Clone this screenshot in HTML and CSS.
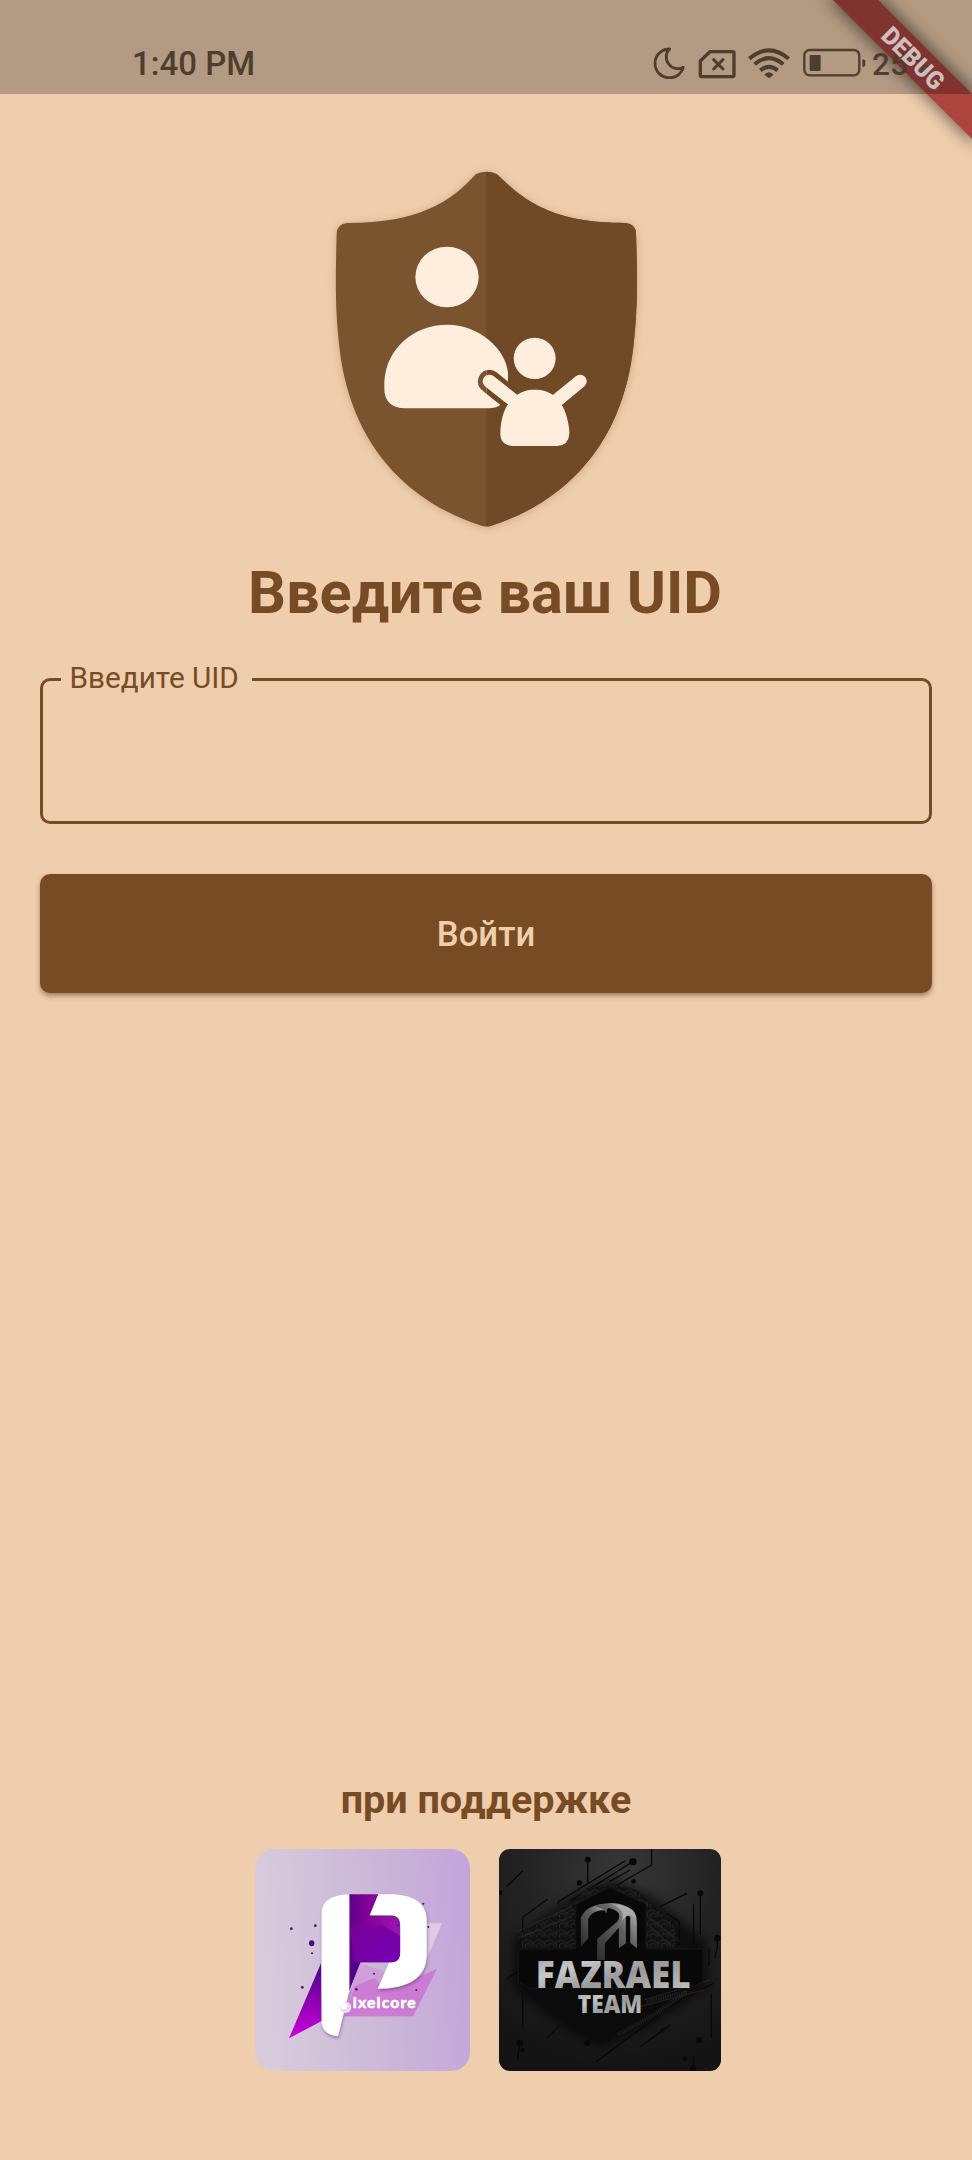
FILE: index.html
```html
<!DOCTYPE html>
<html lang="ru">
<head>
<meta charset="utf-8">
<title>UID</title>
<link rel="stylesheet" href="styles.css">
</head>
<body>
<div class="screen">
  <svg class="ribbon" viewBox="0 0 160 160">
    <defs><filter id="soft" x="-20%" y="-20%" width="140%" height="140%"><feGaussianBlur stdDeviation="8"/></filter></defs>
    <path d="M20-1H65L161 95V140Z" fill="#000" stroke="#000" stroke-width="6" opacity=".5" filter="url(#soft)"/>
    <path d="M20-1H65L161 95V140Z" fill="#ad443d"/>
  </svg>
  <header class="status">
    <span class="time">1:40 PM</span>
    <svg class="indicators" viewBox="100 135 640 110" fill="none" stroke="#4e3e2f" stroke-width="7" stroke-linejoin="round" stroke-linecap="round">
      <path d="M150 147C126 147 106 165 106 190C106 215 125 233 149 233C170 233 186 220 191 202C176 210 157 206 147 192C136 177 138 158 150 147Z" stroke-width="8.5"/>
      <path d="M271 155H339Q343 155 343 159V226Q343 230 339 230H246Q242 230 242 226V183Z" stroke-width="10"/>
      <path d="M282 179L310 207M310 179L282 207" stroke-width="9"/>
      <path d="M389 176Q448 126 507 176M405 193Q448 156 491 193M422 211Q448 190 474 211" stroke-width="12" stroke-linecap="butt"/>
      <path d="M437 224Q448 214 459 224L448 232Z" fill="#4e3e2f" stroke-width="4"/>
      <rect x="554" y="150" width="165" height="76" rx="16"/>
      <rect x="570" y="165" width="33" height="48" rx="3" fill="#4e3e2f" stroke="none"/>
      <path d="M728 178Q737 178 737 184V194Q737 200 728 200Z" fill="#4e3e2f" stroke="none"/>
    </svg>
    <span class="charge">25%</span>
  </header>
  <svg class="ribbon-label" viewBox="0 0 160 160">
    <text x="0" y="9" transform="translate(101.4 58) rotate(45)" text-anchor="middle" textLength="77" lengthAdjust="spacingAndGlyphs">DEBUG</text>
  </svg>

  <main class="login">
    <svg class="shield" viewBox="0 0 990 1140">
      <defs>
        <clipPath id="right"><rect x="499" y="0" width="491" height="1140"/></clipPath>
        <clipPath id="left"><rect x="460" y="600" width="39" height="130"/></clipPath>
      </defs>
      <path id="s" fill="#7a532f" d="M499 35Q518 35 531 43C615 125 700 189 916 189Q948 192 948 222C953 370 952 455 940 560C910 830 760 1015 518 1096Q499 1103 480 1096C238 1015 88 830 58 560C46 455 46 370 50 222Q50 192 82 189C298 189 393 125 467 43Q480 35 499 35Z"/>
      <use href="#s" clip-path="url(#right)" class="shade"/>
      <g fill="#ffeede">
        <ellipse cx="381" cy="351" rx="95" ry="91"/>
        <path d="M193 665C198 565 282 494 381 494C475 494 558 565 564 640V690Q556 745 505 745H252Q193 742 193 685Z"/>
      </g>
      <path d="M508 664L590 730" stroke="#6e4824" stroke-width="69" stroke-linecap="round" clip-path="url(#right)"/>
      <path d="M508 664L540 691" stroke="#7a532f" stroke-width="69" stroke-linecap="round" clip-path="url(#left)"/>
      <g fill="#ffeede">
        <ellipse cx="644" cy="595" rx="63" ry="62"/>
        <path d="M508 664L602 738M780 664L690 738" stroke="#ffeede" stroke-width="40" stroke-linecap="round"/>
        <path d="M644 689C670 689 685 695 700 706L727 737C742 765 748 800 748 822Q746 855 712 858H577Q542 855 541 822C541 795 546 762 561 737L590 706C604 695 620 689 644 689Z"/>
      </g>
    </svg>
    <h1 class="title">Введите ваш UID</h1>
    <fieldset class="field"><legend class="field-label">Введите UID</legend></fieldset>
    <button class="submit">Войти</button>
  </main>

  <footer class="support">
    <h2 class="support-title">при поддержке</h2>
    <div class="logos">
      <svg class="logo pixelcore" viewBox="30 32 645 666" preserveAspectRatio="none">
        <defs>
          <linearGradient id="lilac" x1="0" y1=".1" x2="1" y2="0"><stop offset="0" stop-color="#d8cbdc"/><stop offset=".55" stop-color="#cab7d7"/><stop offset="1" stop-color="#c2a4dc"/></linearGradient>
          <linearGradient id="violet" x1="0" y1="0" x2="0" y2="1"><stop offset="0" stop-color="#4e0087"/><stop offset="1" stop-color="#cc00dc"/></linearGradient>
          <linearGradient id="stem" x1="0" y1="0" x2="1" y2="0"><stop offset="0" stop-color="#5c0088"/><stop offset=".4" stop-color="#850099"/><stop offset="1" stop-color="#9c18b0"/></linearGradient>
          <linearGradient id="hill" x1="0" y1="0" x2="1" y2="1"><stop offset="0" stop-color="#780093"/><stop offset="1" stop-color="#7500b5"/></linearGradient>
          <filter id="drop" x="-20%" y="-20%" width="140%" height="140%"><feDropShadow dx="2" dy="6" stdDeviation="5" flood-color="#5b2a80" flood-opacity=".5"/></filter>
        </defs>
        <rect x="30" y="32" width="645" height="666" fill="url(#lilac)"/>
        <path d="M545 255H591L545 362Z" fill="#dfcbe4"/>
        <path d="M341 372L295 534H504L576 391L490 428L395 391Z" fill="#cf91d8" opacity=".65"/>
        <path d="M300 534L330 443L390 418L408 445L450 440L545 407L576 391L504 534Z" fill="#cb70d0" opacity=".75"/>
        <path d="M228 375L132 600L230 548Z" fill="url(#violet)"/>
        <path d="M312 168H400L376 231H438Q466 231 466 262V345Q466 372 438 372H346L312 457Z" fill="url(#stem)"/>
        <path d="M315 272L346 248L385 268L410 260L466 292V345Q466 372 438 372H330Z" fill="url(#hill)"/>
        <path d="M312 372H346L312 457Z" fill="#51008b"/>
        <g fill="#fff" filter="url(#drop)">
          <path d="M313 168V457L279 594Q231 588 230 550V225C230 188 260 170 313 168Z"/>
          <path d="M400 168H435C505 168 545 195 545 245V350C545 420 485 452 398 451L432 373C460 373 466 362 466 340V262C466 238 455 231 435 231H374Z"/>
        </g>
        <circle cx="302" cy="507" r="17" fill="#eadcec"/><circle cx="296" cy="503" r="10" fill="#fff"/>
        <g fill="#4c087d"><ellipse cx="200" cy="315" rx="8" ry="9"/><circle cx="139" cy="271" r="4"/><circle cx="211" cy="262" r="4"/><circle cx="201" cy="345" r="3"/><circle cx="172" cy="447" r="4"/><circle cx="535" cy="196" r="3"/><circle cx="550" cy="266" r="3"/><circle cx="387" cy="406" r="3"/><circle cx="334" cy="453" r="4"/><circle cx="514" cy="455" r="3"/><circle cx="459" cy="261" r="3"/></g>
        <text class="pixel-text" x="323" y="509" textLength="189" lengthAdjust="spacing">ixelcore</text>
      </svg>
      <svg class="logo fazrael" viewBox="27 32 665 666" preserveAspectRatio="none">
        <defs>
          <radialGradient id="coal" cx=".55" cy=".1" r=".9"><stop offset="0" stop-color="#373737"/><stop offset=".45" stop-color="#242424"/><stop offset="1" stop-color="#141414"/></radialGradient>
          <linearGradient id="steel" x1="0" y1="0" x2="1" y2="1"><stop offset="0" stop-color="#959595"/><stop offset=".3" stop-color="#c8c8c8"/><stop offset=".55" stop-color="#999"/><stop offset="1" stop-color="#c9c9c9"/></linearGradient>
          <linearGradient id="metal" x1="0" y1="1" x2="1" y2="0"><stop offset="0" stop-color="#292929"/><stop offset=".6" stop-color="#626262"/><stop offset="1" stop-color="#c0c0c0"/></linearGradient>
          <filter id="haze" x="-20%" y="-20%" width="140%" height="140%"><feGaussianBlur stdDeviation="14"/></filter>
          <pattern id="circuit" width="34" height="30" patternUnits="userSpaceOnUse"><path d="M0 8Q10 0 18 9T34 8M4 28Q2 14 14 16T20 27M24 14Q34 16 28 26" fill="none" stroke="#343434" stroke-width="2"/></pattern>
        </defs>
        <rect x="27" y="32" width="665" height="666" fill="url(#coal)"/>
        <path d="M70 300L250 170L360 120L480 170L650 310V450L480 560L335 625L220 570L70 450Z" fill="#050505" opacity=".6" filter="url(#haze)"/>
        <g fill="none" stroke="#080808" stroke-width="4">
          <path d="M293 65V138M484 32V80L355 155M428 70L240 188M404 68L205 190V200M630 165V290M610 198V318M681 300V330L672 360M656 330V383M98 320V237L172 183M50 145L98 98M98 460V568M90 610L83 665M170 600L210 560M500 535L318 670M450 625L540 560M610 655V690M663 465V600M510 205L590 165M530 225L567 250V320M358 130L420 95M600 470L670 435M50 420L85 400"/>
        </g>
        <g fill="#080808"><circle cx="293" cy="64" r="9"/><circle cx="428" cy="70" r="11"/><circle cx="268" cy="134" r="8"/><circle cx="430" cy="129" r="7"/><circle cx="630" cy="165" r="9"/><circle cx="681" cy="300" r="10"/><circle cx="30" cy="163" r="7"/><circle cx="90" cy="614" r="10"/><circle cx="98" cy="635" r="7"/><circle cx="292" cy="614" r="9"/><circle cx="516" cy="575" r="6"/><circle cx="626" cy="605" r="9"/><circle cx="583" cy="661" r="7"/><circle cx="608" cy="690" r="9"/></g>
        <path d="M95 330V285L155 250L250 190L290 150L360 138L440 155L480 195L530 235L555 265V330Z" fill="#111"/>
        <path d="M95 330V285L155 250L250 190L290 150L360 138L440 155L480 195L530 235L555 265V330Z" fill="url(#circuit)"/>
        <path d="M145 450H570V490L480 540L330 606L240 560L150 495Z" fill="#0b0b0b"/>
        <path d="M470 490L590 460L490 530L380 590" fill="none" stroke="#202020" stroke-width="12" stroke-dasharray="4 3"/>
        <path d="M80 280L245 205M85 300L245 235M470 235L570 310M470 255L540 320M460 485L660 425M450 505L640 455" stroke="#303030" stroke-width="2"/>
        <path d="M85 332H257V198L360 147L467 198V332H638V430L600 450H120L85 430Z" fill="#080808" stroke="#161616" stroke-width="3"/>
        <path d="M272 325V238Q290 196 355 197L350 215Q304 215 294 243V300Z" fill="url(#metal)"/>
        <path d="M312 202Q374 184 414 207Q439 218 440 250V330L420 314V235L407 230V315L386 330V268L344 315V365H321V302L382 249Q402 218 352 208L349 225Q342 210 312 202Z" fill="url(#metal)"/>
        <path d="M365 198Q430 200 438 238L420 229Q400 232 383 270Q420 218 365 198Z" fill="#aaa"/>
        <g class="faz-text" fill="url(#steel)">
          <text x="137" y="448" font-size="112" textLength="464" lengthAdjust="spacingAndGlyphs">FAZRAEL</text>
          <text x="263" y="524" font-size="75" textLength="193" lengthAdjust="spacingAndGlyphs">TEAM</text>
        </g>
      </svg>
    </div>
  </footer>
</div>
</body>
</html>
```
FILE: styles.css
```css
* { box-sizing: border-box; }
body { margin: 0; background: #efceae; font-family: Roboto, "Liberation Sans", sans-serif; color: #774b24; }
.screen { position: relative; display: flex; flex-direction: column; width: 972px; height: 2160px; overflow: hidden; }
.status { position: relative; z-index: 2; display: flex; align-items: flex-start; height: 93.5px; padding: 45px 0 0 132px; background: rgba(0, 0, 0, .25); color: #4e3e2f; white-space: nowrap; }
.time { width: 521.3px; font-size: 33px; line-height: 38px; font-weight: 500; }
.indicators { flex: none; width: 213.3px; height: 36.7px; }
.charge { margin-left: 5.5px; font-size: 31.5px; line-height: 40px; font-weight: 500; }
.ribbon, .ribbon-label { position: absolute; top: 0; right: 0; width: 160px; height: 160px; }
.ribbon { z-index: 1; overflow: visible; }
.ribbon-label { z-index: 3; font-size: 25px; font-weight: 900; fill: #cdbdbd; }
.login { display: flex; flex-direction: column; padding: 66.5px 40px 0; }
.shield { width: 330px; height: 380px; margin-left: 280px; overflow: visible; filter: drop-shadow(0 1px 4px rgba(120, 75, 36, .3)); }
.shade { filter: brightness(.89) saturate(1.1); }
.title { margin: 18px 0 0; padding-right: 2px; font-size: 59.5px; line-height: 70px; font-weight: 700; letter-spacing: -.05px; text-align: center; white-space: nowrap; }
.field { height: 162px; margin: 34px 0 0; padding: 0 18px; border: 3px solid #774b24; border-radius: 10px; min-width: 0; }
.field-label { padding: 0 13px 2px 8.5px; font-size: 29.7px; line-height: 32px; }
.submit { height: 119px; margin-top: 49.5px; padding: 2px 0 0; border: 0; border-radius: 10px; background: #774b24; color: #efceae; font: 500 34.7px/41px Roboto, sans-serif; box-shadow: 0 3px 5px rgba(70, 35, 10, .45); }
.support { display: flex; flex-direction: column; align-items: center; margin-top: auto; padding-bottom: 89.5px; }
.support-title { margin: 0 0 26px; font-size: 39.5px; line-height: 47px; font-weight: 700; }
.logos { display: flex; gap: 29px; margin-left: 4px; }
.logo { display: block; height: 222px; }
.pixelcore { width: 215px; border-radius: 19px; }
.fazrael { width: 222px; border-radius: 11px; }
.pixel-text { font-family: Lato, sans-serif; font-size: 47px; font-weight: 900; fill: #fff; stroke: #fff; stroke-width: 1.5px; }
.faz-text { font-family: "Open Sans", Lato, sans-serif; font-weight: 800; }
```
